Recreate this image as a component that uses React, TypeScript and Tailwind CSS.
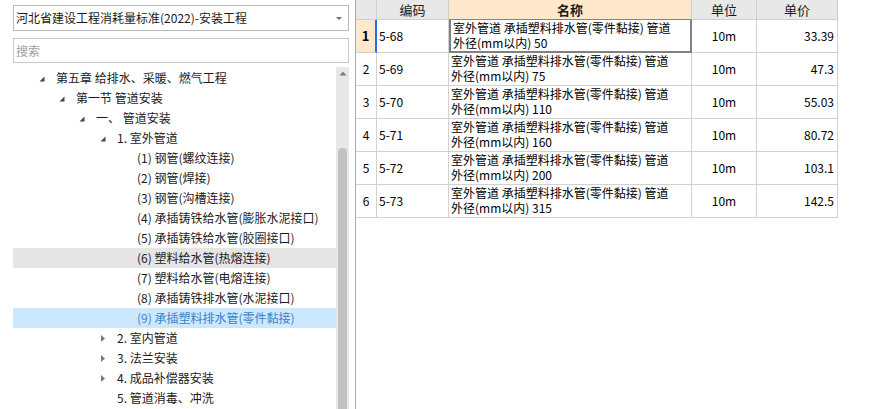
import React from 'react'

type Node = {
    label: string
    level: number
    toggle?: 'open' | 'closed'
    state?: 'hover' | 'selected'
}

const tree: Node[] = [
    { label: '第五章 给排水、采暖、燃气工程', level: 0, toggle: 'open' },
    { label: '第一节 管道安装', level: 1, toggle: 'open' },
    { label: '一、 管道安装', level: 2, toggle: 'open' },
    { label: '1. 室外管道', level: 3, toggle: 'open' },
    { label: '(1) 钢管(螺纹连接)', level: 4 },
    { label: '(2) 钢管(焊接)', level: 4 },
    { label: '(3) 钢管(沟槽连接)', level: 4 },
    { label: '(4) 承插铸铁给水管(膨胀水泥接口)', level: 4 },
    { label: '(5) 承插铸铁给水管(胶圈接口)', level: 4 },
    { label: '(6) 塑料给水管(热熔连接)', level: 4, state: 'hover' },
    { label: '(7) 塑料给水管(电熔连接)', level: 4 },
    { label: '(8) 承插铸铁排水管(水泥接口)', level: 4 },
    { label: '(9) 承插塑料排水管(零件黏接)', level: 4, state: 'selected' },
    { label: '2. 室内管道', level: 3, toggle: 'closed' },
    { label: '3. 法兰安装', level: 3, toggle: 'closed' },
    { label: '4. 成品补偿器安装', level: 3, toggle: 'closed' },
    { label: '5. 管道消毒、冲洗', level: 3 },
]

const rows = [
    { code: '5-68', size: '50', price: '33.39' },
    { code: '5-69', size: '75', price: '47.3' },
    { code: '5-70', size: '110', price: '55.03' },
    { code: '5-71', size: '160', price: '80.72' },
    { code: '5-72', size: '200', price: '103.1' },
    { code: '5-73', size: '315', price: '142.5' },
]

const indents = ['pl-[26px]', 'pl-[46px]', 'pl-[66px]', 'pl-[87px]', 'pl-[107px]']

function Toggle({ kind }: { kind?: 'open' | 'closed' }) {
    if (kind === 'open') {
        return (
            <svg width="17" height="20" viewBox="0 0 17 20" className="shrink-0">
                <path d="M5.5 13.5 L0.5 13.5 L5.5 8.5 Z" fill="#454545" />
            </svg>
        )
    }
    if (kind === 'closed') {
        return (
            <svg width="17" height="20" viewBox="0 0 17 20" className="shrink-0">
                <path d="M1 7 L5 10.5 L1 14 Z" fill="#7a7a7a" />
            </svg>
        )
    }
    return <span className="w-[17px] shrink-0" />
}

function TreeRow({ node }: { node: Node }) {
    const bg =
        node.state === 'hover' ? 'bg-[#e5e5e5]' : node.state === 'selected' ? 'bg-[#cce8ff]' : ''
    const color = node.state === 'selected' ? 'text-[#3d7fc8]' : 'text-[#1b1b1b]'
    return (
        <div className={`flex h-[20px] items-center ${indents[node.level]} ${bg}`}>
            <Toggle kind={node.toggle} />
            <span className={`whitespace-pre text-[12px] leading-[20px] ${color}`}>{node.label}</span>
        </div>
    )
}

function LeftPanel() {
    return (
        <div className="flex w-[349px] shrink-0 flex-col pl-[13px] font-['Noto_Sans_CJK_SC',sans-serif]">
            <div className="mt-[5px] flex h-[26px] items-center justify-between border border-[#b9b9b9] pl-[2px] pr-[5px]">
                <span className="text-[12px] text-[#1b1b1b]">河北省建设工程消耗量标准(2022)-安装工程</span>
                <svg width="8" height="5" viewBox="0 0 8 5">
                    <path d="M1 1 L7 1 L4 4 Z" fill="#6f6f6f" />
                </svg>
            </div>
            <div className="mt-[7px] flex h-[25px] items-center border border-[#c8c8c8] pl-[2px]">
                <span className="text-[12px] text-[#a0a0a0]">搜索</span>
            </div>
            <div className="mt-[4px] flex min-h-0 flex-1">
                <div className="flex-1 overflow-hidden pt-[1px]">
                    {tree.map((n) => (
                        <TreeRow key={n.label} node={n} />
                    ))}
                </div>
                <div className="flex w-[13px] flex-col bg-[#e8e8e8]">
                    <div className="flex h-[13px] items-center justify-center">
                        <svg width="8" height="5" viewBox="0 0 8 5">
                            <path d="M0.5 4.5 L7.5 4.5 L4 0.5 Z" fill="#7a7a7a" />
                        </svg>
                    </div>
                    <div className="mt-[68px] flex-1 px-[2px]">
                        <div className="h-full rounded-t-[4px] bg-[#c2c2c2]" />
                    </div>
                </div>
            </div>
        </div>
    )
}

function Table() {
    const cell = 'border-b border-r border-[#d2d2d2]'
    const head = 'flex h-[20px] items-center justify-center border-b border-r border-[#cfcfcf] bg-[#e8e8e8] text-[13px] text-[#1b1b1b]'
    return (
        <div className="grid grid-cols-[21px_72px_243px_65px_81px] font-['Noto_Sans_CJK_SC',sans-serif] text-[12px] text-black">
            <div className={head} />
            <div className={head}>编码</div>
            <div className={`${head} border-b-[#4a90e2] bg-[#fde8cc] font-bold`}>名称</div>
            <div className={head}>单位</div>
            <div className={head}>单价</div>
            {rows.map((r, i) => {
                const first = i === 0
                return (
                    <React.Fragment key={r.code}>
                        <div
                            className={`flex h-[33px] items-center justify-center ${cell} ${
                                first ? 'border-r-[2px] border-r-[#1e6fff] bg-[#fde8cc] font-[\'Liberation_Serif\',serif] text-[13px] font-bold' : ''
                            }`}
                        >
                            {i + 1}
                        </div>
                        <div className={`flex h-[33px] items-center pl-[2px] ${cell}`}>{r.code}</div>
                        <div
                            className={`flex h-[33px] flex-col pl-[2px] text-[12px] leading-[15px] ${
                                first ? 'border-[2px] border-t-0 border-[#808080]' : cell
                            }`}
                        >
                            <div className="whitespace-pre">室外管道 承插塑料排水管(零件黏接) 管道</div>
                            <div className="whitespace-pre">外径(mm以内) {r.size}</div>
                        </div>
                        <div className={`flex h-[33px] items-center justify-center ${cell}`}>10m</div>
                        <div className={`flex h-[33px] items-center justify-end pr-[3px] ${cell}`}>{r.price}</div>
                    </React.Fragment>
                )
            })}
        </div>
    )
}

export default function App() {
    return (
        <div className="flex h-[409px] w-[886px] overflow-hidden bg-white">
            <LeftPanel />
            <div className="ml-[6px] flex-1 border-l border-[#adadad]">
                <Table />
            </div>
        </div>
    )
}
